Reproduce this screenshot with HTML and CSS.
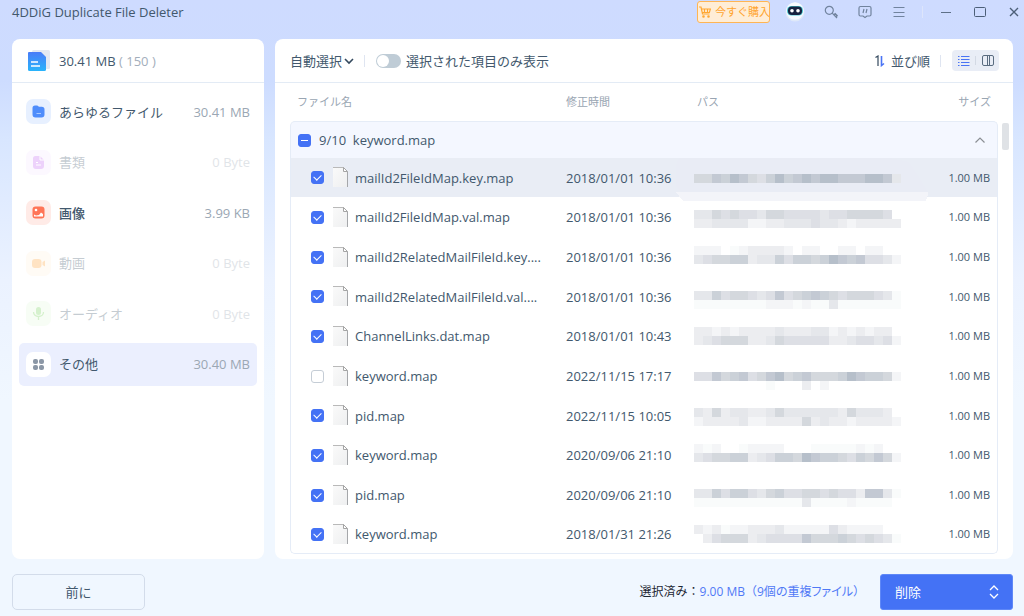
FILE: index.html
```html
<!DOCTYPE html>
<html lang="ja">
<head>
<meta charset="utf-8">
<meta name="viewport" content="width=device-width, initial-scale=1">
<title>4DDiG Duplicate File Deleter</title>
<link rel="stylesheet" href="styles.css">
</head>
<body>
<svg class="defs" width="0" height="0" aria-hidden="true">
  <defs>
    <linearGradient id="docfill" x1="0" y1="0" x2="0" y2="1"><stop offset="0" stop-color="#4a7cf8"/><stop offset="1" stop-color="#29b4fb"/></linearGradient>
    <linearGradient id="pagefill" x1="0" y1="0" x2="1" y2="1"><stop offset="0" stop-color="#fafafa"/><stop offset="1" stop-color="#eeeff0"/></linearGradient>
    <symbol id="page" viewBox="0 0 16 21">
      <path d="M0 .5h11l4 4V20H0z" fill="url(#pagefill)"/>
      <path d="M0 .5h11" stroke="#b9b9b9" fill="none"/>
      <path d="M14.5 4.500V20" stroke="#a5a7aa" fill="none"/>
      <path d="M10.500 .5v4h4z" fill="#fff" stroke="#a5a5a5"/>
    </symbol>
  </defs>
</svg>

<header class="titlebar">
  <h1 class="app-name">4DDiG Duplicate File Deleter</h1>
  <button class="buy" type="button">
    <svg width="12" height="12" viewBox="0 0 12 12" fill="none" stroke="#ffa733" stroke-width="1.200"><path d="M0 1h2l1.500 7h7M2.400 3h9l-1 3.500H3.200M5.500 3.200v3M8.500 3.200v3"/><circle cx="4.500" cy="10.500" r=".7"/><circle cx="9.500" cy="10.500" r=".7"/></svg>
    今すぐ購入
  </button>
  <button class="tool avatar" type="button" aria-label="アシスタント">
    <svg width="20" height="22" viewBox="0 0 20 22"><circle cx="10" cy="11" r="9.500" fill="#dfe9f9"/><circle cx="10" cy="10" r="8.800" fill="#f7faff"/><rect x="2" y="5" width="16" height="9.500" rx="4.500" fill="#48c6cf"/><rect x="3" y="5.500" width="14" height="8.500" rx="4" fill="#17213f"/><circle cx="7" cy="9.700" r="1.800" fill="#fff"/><circle cx="13" cy="9.700" r="1.800" fill="#fff"/></svg>
  </button>
  <button class="tool after-avatar" type="button" aria-label="登録">
    <svg width="14" height="14" viewBox="0 0 14 14" fill="none" stroke="#71839e" stroke-width="1.200"><circle cx="5.300" cy="5.300" r="4"/><path d="M8.200 8.200l4.800 4.800"/><path d="M10 9.800l1.200-1 1.800 1.800-.8 1.200" stroke-width="1.600"/></svg>
  </button>
  <button class="tool" type="button" aria-label="フィードバック">
    <svg width="14" height="14" viewBox="0 0 14 14" fill="none" stroke="#71839e" stroke-width="1.200"><path d="M2.500 1.500h9a1.500 1.500 0 0 1 1.500 1.500v6.500a1.500 1.500 0 0 1-1.500 1.500H9l-2 1.500L5 11H2.500A1.500 1.500 0 0 1 1 9.500V3a1.500 1.500 0 0 1 1.500-1.500z"/><path d="M6 4l-1 4M9 4L8 8"/></svg>
  </button>
  <button class="tool" type="button" aria-label="メニュー">
    <svg width="12" height="12" viewBox="0 0 12 12" stroke="#71839e"><path d="M.5 1.500h11M.5 6.500h11M.5 10.500h11"/></svg>
  </button>
  <span class="title-sep"></span>
  <button class="tool" type="button" aria-label="最小化">
    <svg width="12" height="12" viewBox="0 0 12 12" stroke="#5e7088"><path d="M1 6.500h10"/></svg>
  </button>
  <button class="tool" type="button" aria-label="最大化">
    <svg width="12" height="12" viewBox="0 0 12 12" fill="none" stroke="#4c5f78"><rect x=".5" y="1.500" width="11" height="9" rx="1"/></svg>
  </button>
  <button class="tool close" type="button" aria-label="閉じる">
    <svg width="10" height="10" viewBox="0 0 10 10" stroke="#4c5f78" stroke-width="1.400"><path d="M1 1l8 8M9 1L1 9"/></svg>
  </button>
</header>

<main class="workspace">
  <aside class="panel sidebar">
    <div class="summary">
      <svg width="24" height="24" viewBox="0 0 24 24"><rect x="6" y="1" width="18" height="19" rx="1.500" fill="#e3e8f2"/><path d="M3 3h12l5 5v12.500a1.500 1.500 0 0 1-1.500 1.500h-15A1.500 1.500 0 0 1 2 20.500V4a1 1 0 0 1 1-1z" fill="url(#docfill)"/><path d="M5 13h7M5 17h9" stroke="#fff" stroke-width="1.500"/></svg>
      <span>30.41 MB <span class="muted">( 150 )</span></span>
    </div>
    <nav class="kinds">
      <a class="kind" href="#all"><span class="tile blue"><svg width="13" height="13" viewBox="0 0 13 13"><path d="M.5 3A2.500 2.500 0 0 1 3 .5h2.300l1.700 1.300h2.800A2.700 2.700 0 0 1 12.500 4.500v5a3 3 0 0 1-3 3h-6a3 3 0 0 1-3-3z" fill="#4f8dfb"/><path d="M4.500 8.500h4.500" stroke="#a9c9ff"/></svg></span><span class="kind-name">あらゆるファイル</span><span class="kind-size">30.41 MB</span></a>
      <a class="kind empty" href="#docs"><span class="tile violet"><svg width="13" height="13" viewBox="0 0 13 13"><path d="M3.500 0H8l4 4v6a3 3 0 0 1-3 3H4a3 3 0 0 1-3-3V2.500A2.500 2.500 0 0 1 3.500 0z" fill="#c56cf5"/><path d="M8 0v4h4M4 6.500h2M4 9h5" stroke="#fff" fill="none"/></svg></span><span class="kind-name">書類</span><span class="kind-size">0 Byte</span></a>
      <a class="kind" href="#images"><span class="tile red"><svg width="13" height="13" viewBox="0 0 13 13"><rect x=".5" y=".5" width="12" height="12" rx="3" fill="#ff7557"/><circle cx="4" cy="4" r="1.300" fill="#fff"/><path d="M2 10.500v-2l2 1 3-.5 2-2.500 2 1.500v2.500z" fill="#fff"/></svg></span><span class="kind-name strong">画像</span><span class="kind-size">3.99 KB</span></a>
      <a class="kind empty" href="#videos"><span class="tile orange"><svg width="13" height="13" viewBox="0 0 13 13"><rect y="2" width="9.500" height="9" rx="3" fill="#ffa53b"/><path d="M10.500 5l2.500-1.500v6L10.500 8z" fill="#ffa53b"/></svg></span><span class="kind-name">動画</span><span class="kind-size">0 Byte</span></a>
      <a class="kind empty" href="#audio"><span class="tile green"><svg width="13" height="13" viewBox="0 0 13 13"><rect x="4" width="5" height="8" rx="2.500" fill="#76d25b"/><path d="M1.500 5a5 4.500 0 0 0 10 0M6.500 9.500v3.500" stroke="#76d25b" stroke-width="1.300" fill="none"/></svg></span><span class="kind-name">オーディオ</span><span class="kind-size">0 Byte</span></a>
      <a class="kind current" href="#other" aria-current="page"><span class="tile white"><svg width="13" height="13" viewBox="0 0 13 13" fill="#8b97a6"><rect x="1" y="1" width="5" height="5" rx="2"/><rect x="7" y="1" width="5" height="5" rx="2"/><rect x="1" y="7" width="5" height="5" rx="2"/><rect x="7" y="7" width="5" height="5" rx="2"/></svg></span><span class="kind-name">その他</span><span class="kind-size">30.40 MB</span></a>
    </nav>
  </aside>

  <section class="panel results">
    <div class="toolbar">
      <button class="plain auto" type="button" aria-haspopup="menu">自動選択<svg width="10" height="8" viewBox="0 0 10 8" fill="none" stroke="#34495e" stroke-width="1.600"><path d="M1 2l4 4 4-4"/></svg></button>
      <span class="sep"></span>
      <label class="only"><input class="switch" type="checkbox" role="switch">選択された項目のみ表示</label>
      <button class="plain sort" type="button"><svg width="10" height="12" viewBox="0 0 10 12" fill="none" stroke-width="1.200"><path d="M.5 2.500L3 1v10" stroke="#34495e"/><path d="M6.500 1v9.500L9 8.500" stroke="#4a74f5" stroke-width="1.600"/></svg>並び順</button>
      <span class="sep"></span>
      <div class="views">
        <button class="plain view" type="button" aria-label="リスト表示" aria-pressed="true"><svg width="12" height="12" viewBox="0 0 12 12" stroke="#4a74f5" stroke-width="1.200"><path d="M0 1.500h1.500M3 1.500h8.500M0 4.500h1.500M3 4.500h8.500M0 7.500h1.500M3 7.500h8.500M0 10.500h1.500M3 10.500h8.500"/></svg></button>
        <span class="view-sep"></span>
        <button class="plain view" type="button" aria-label="分割表示" aria-pressed="false"><svg width="12" height="12" viewBox="0 0 12 12" fill="none" stroke="#5a6c80"><rect x=".5" y=".5" width="11" height="10" rx="1.500"/><path d="M5.500 .5v10M7.500 .5v10"/></svg></button>
      </div>
    </div>
    <div class="list">
      <table class="files">
        <colgroup><col class="c-name"><col class="c-date"><col><col class="c-size"></colgroup>
        <thead>
          <tr><th scope="col" class="h-name">ファイル名</th><th scope="col">修正時間</th><th scope="col" class="h-path">パス</th><th scope="col" class="size">サイズ</th></tr>
        </thead>
        <tbody class="group">
          <tr><th scope="rowgroup" colspan="4"><div class="group-head"><input id="g" class="tick part" type="checkbox"><label for="g">9/10&nbsp; keyword.map</label><button class="plain fold" type="button" aria-label="折りたたむ"><svg width="10" height="6" viewBox="0 0 10 6" fill="none" stroke="#8b8f94" stroke-width="1.200"><path d="M.5 5.500L5 1l4.500 4.500"/></svg></button></div></th></tr>
        </tbody>
        <tbody class="rows">
          <tr class="active"><td><label class="name"><input class="tick" type="checkbox" checked><svg class="page"><use href="#page"/></svg>mailId2FileIdMap.key.map</label></td><td>2018/01/01 10:36</td><td class="path"></td><td class="size">1.00 MB</td></tr>
          <tr><td><label class="name"><input class="tick" type="checkbox" checked><svg class="page"><use href="#page"/></svg>mailId2FileIdMap.val.map</label></td><td>2018/01/01 10:36</td><td class="path"></td><td class="size">1.00 MB</td></tr>
          <tr><td><label class="name"><input class="tick" type="checkbox" checked><svg class="page"><use href="#page"/></svg>mailId2RelatedMailFileId.key....</label></td><td>2018/01/01 10:36</td><td class="path"></td><td class="size">1.00 MB</td></tr>
          <tr><td><label class="name"><input class="tick" type="checkbox" checked><svg class="page"><use href="#page"/></svg>mailId2RelatedMailFileId.val....</label></td><td>2018/01/01 10:36</td><td class="path"></td><td class="size">1.00 MB</td></tr>
          <tr><td><label class="name"><input class="tick" type="checkbox" checked><svg class="page"><use href="#page"/></svg>ChannelLinks.dat.map</label></td><td>2018/01/01 10:43</td><td class="path"></td><td class="size">1.00 MB</td></tr>
          <tr><td><label class="name"><input class="tick" type="checkbox"><svg class="page"><use href="#page"/></svg>keyword.map</label></td><td>2022/11/15 17:17</td><td class="path"></td><td class="size">1.00 MB</td></tr>
          <tr><td><label class="name"><input class="tick" type="checkbox" checked><svg class="page"><use href="#page"/></svg>pid.map</label></td><td>2022/11/15 10:05</td><td class="path"></td><td class="size">1.00 MB</td></tr>
          <tr><td><label class="name"><input class="tick" type="checkbox" checked><svg class="page"><use href="#page"/></svg>keyword.map</label></td><td>2020/09/06 21:10</td><td class="path"></td><td class="size">1.00 MB</td></tr>
          <tr><td><label class="name"><input class="tick" type="checkbox" checked><svg class="page"><use href="#page"/></svg>pid.map</label></td><td>2020/09/06 21:10</td><td class="path"></td><td class="size">1.00 MB</td></tr>
          <tr><td><label class="name"><input class="tick" type="checkbox" checked><svg class="page"><use href="#page"/></svg>keyword.map</label></td><td>2018/01/31 21:26</td><td class="path"></td><td class="size">1.00 MB</td></tr>
        </tbody>
      </table>
      <span class="thumb"></span>
    </div>
  </section>
</main>

<footer class="actions">
  <button class="back" type="button">前に</button>
  <p class="picked">選択済み：<span class="count">9.00 MB（<span class="dupes">9個の重複ファイル</span>）</span></p>
  <button class="delete" type="button">削除<svg width="10" height="14" viewBox="0 0 10 14" fill="none" stroke="#fff" stroke-width="1.300"><path d="M1 5l4-4 4 4M1 9l4 4 4-4"/></svg></button>
</footer>
<script src="mosaic.js"></script>
</body>
</html>
```

FILE: styles.css
```css
* { box-sizing: border-box; }

body {
  margin: 0;
  min-height: 100vh;
  display: flex;
  flex-direction: column;
  background: linear-gradient(#cedbff 0, #cddcff 80px, #d8e6ff 140px, #ebf2ff 280px, #f0f7ff 400px, #f0f7ff 100%);
  color: #42586d;
  font: 13px/20px "Open Sans", "Noto Sans CJK JP", sans-serif;
}

.defs { position: absolute; }
svg { display: block; flex: none; }

button {
  font: inherit;
  color: inherit;
  cursor: pointer;
}

.plain, .tool {
  border: 0;
  padding: 0;
  background: none;
}

/* Title bar */
.titlebar {
  display: flex;
  align-items: center;
  height: 24px;
  margin-bottom: 15px;
  padding-left: 12px;
}

.app-name {
  flex: 1;
  margin: 0;
  font-size: 13px;
  font-weight: 400;
  white-space: nowrap;
}

.buy {
  display: flex;
  align-items: center;
  gap: 4px;
  width: 73px;
  height: 22px;
  margin-right: 8px;
  padding: 0 0 0 1px;
  border: 1px solid #ffb554;
  border-radius: 3px;
  background: #ffedd6;
  color: #ffa42e;
  font-size: 11px;
  white-space: nowrap;
}

.tool {
  display: flex;
  align-items: center;
  justify-content: center;
  width: 34px;
  height: 24px;
}

.after-avatar { margin-left: 2px; }

.close {
  width: 27px;
  justify-content: flex-start;
  padding-left: 12px;
}

.title-sep {
  width: 1px;
  height: 12px;
  margin: 0 6px;
  background: #dde5fb;
}

/* Panels */
.workspace {
  flex: 1;
  display: flex;
  gap: 11px;
  padding: 0 11px 0 12px;
}

.panel {
  background: #fff;
  border-radius: 8px;
}

.sidebar { width: 252px; flex: none; }

.summary {
  display: flex;
  align-items: center;
  gap: 9px;
  height: 44px;
  padding-left: 14px;
  border-bottom: 1px solid #e3ebf5;
}

.muted { color: #a3aebb; }

.kinds {
  display: flex;
  flex-direction: column;
  justify-content: space-between;
  min-height: 303px;
  padding: 7px 7px 0;
}

.kind {
  display: flex;
  align-items: center;
  gap: 8px;
  height: 43px;
  padding: 0 7px;
  border-radius: 5px;
  color: inherit;
  text-decoration: none;
}

.kind-name { flex: 1; }
.strong { font-weight: 500; }
.kind-size { color: #9ba7b4; }
.empty { opacity: 0.3; }
.current { background: #ebeffe; }

.tile {
  display: grid;
  place-items: center;
  width: 25px;
  height: 25px;
  border-radius: 7px;
}

.blue { background: #e7f0ff; }
.violet { background: #f8e9ff; }
.red { background: #ffebe7; }
.orange { background: #fff2e0; }
.green { background: #e6fbe0; }
.white { background: #fff; }

/* Results toolbar */
.results { flex: 1; min-width: 0; }

.toolbar {
  display: flex;
  align-items: center;
  height: 44px;
  padding: 0 14px 0 15px;
  border-bottom: 1px solid #e3ebf5;
  white-space: nowrap;
}

.auto, .sort, .only {
  display: flex;
  align-items: center;
}

.auto { gap: 2px; }
.sort { gap: 6px; margin-left: auto; }
.only { gap: 5px; }

.sep {
  width: 1px;
  height: 12px;
  margin: 0 11px 0 10px;
  background: #dfe5f1;
}

.switch {
  appearance: none;
  width: 25px;
  height: 14px;
  margin: 0;
  padding: 1px;
  border-radius: 7px;
  background: #bfccd6;
}

.switch::before {
  content: "";
  display: block;
  width: 12px;
  height: 12px;
  border-radius: 50%;
  background: #fff;
}

.switch:checked { background: #4a74f5; }
.switch:checked::before { margin-left: auto; }

.views {
  display: flex;
  align-items: center;
  width: 47px;
  height: 21px;
  border-radius: 4px;
  background: #e9edf6;
}

.view {
  flex: 1;
  display: grid;
  place-items: center;
}

.view-sep { width: 1px; height: 9px; background: #d3d9e4; }

/* File table */
.list {
  position: relative;
  padding: 0 15px 5px;
}

.thumb {
  position: absolute;
  top: 40px;
  right: 4px;
  width: 7px;
  height: 27px;
  border-radius: 2px;
  background: #dfe2e6;
}

.files {
  width: 100%;
  table-layout: fixed;
  border-collapse: separate;
  border-spacing: 0;
}

.c-name { width: 276px; }
.c-date { width: 128px; }
.c-size { width: 70px; }

.files th, .files td {
  padding: 0;
  text-align: left;
  font-weight: 400;
  white-space: nowrap;
}

.files thead th {
  height: 38px;
  color: #99a5b2;
  font-size: 11px;
}

.files .h-name { padding-left: 7px; }
.files .h-path { padding-left: 3px; }
.files .size { padding-right: 7px; text-align: right; font-size: 11px; }

.group th {
  border: 1px solid #e5ecf7;
  border-bottom: 0;
  border-radius: 5px 5px 0 0;
  background: #f4f7ff;
}

.group-head {
  display: flex;
  align-items: center;
  gap: 8px;
  height: 36px;
  padding: 0 12px 0 7px;
}

.fold { margin-left: auto; }

.rows td { height: 40px; }
.rows tr:nth-child(3n + 1) td { height: 39px; }
.rows td:first-child { border-left: 1px solid #e5ecf7; }
.rows td:last-child { border-right: 1px solid #e5ecf7; }
.rows tr:last-child td { border-bottom: 1px solid #e5ecf7; }
.rows tr:last-child td:first-child { border-bottom-left-radius: 5px; }
.rows tr:last-child td:last-child { border-bottom-right-radius: 5px; }
.active td { background: #e9edf5; }
.files .path { vertical-align: top; }

.name {
  display: flex;
  align-items: center;
  padding-left: 20px;
}

.page {
  width: 16px;
  height: 21px;
  margin: 0 6px 0 9px;
}

.tick {
  appearance: none;
  flex: none;
  display: grid;
  place-items: center;
  width: 13px;
  height: 13px;
  margin: 0;
  border: 1px solid #c5cdd6;
  border-radius: 3px;
  background: #fff;
}

.tick:checked, .part {
  border-color: #4472f5;
  background: #4472f5;
}

.tick:checked::before {
  content: "";
  width: 6px;
  height: 4px;
  margin-bottom: 2px;
  border: solid #fff;
  border-width: 0 0 1px 1px;
  transform: rotate(-45deg);
}

.part::before {
  content: "";
  width: 7px;
  height: 1px;
  background: #fff;
}

.mosaic { overflow: visible; }

/* Footer */
.actions {
  display: flex;
  align-items: center;
  padding: 15px 11px 6px 12px;
}

.back, .delete {
  width: 133px;
  height: 36px;
  border-radius: 5px;
}

.back {
  border: 1px solid #d3dcea;
  background: transparent;
}

.picked {
  margin: 0 15px 0 auto;
  color: #1d2733;
  font-size: 12px;
}

.count { color: #5079f6; }
.dupes { font-feature-settings: "palt"; }

.delete {
  display: flex;
  align-items: center;
  justify-content: space-between;
  padding: 0 13px 0 14px;
  border: 1px solid #5f88f7;
  border-radius: 3px;
  background: #4472f5;
  color: #fff;
}
```

FILE: mosaic.js
```js
// Pixelated paths: one digit per 9px block, 0 = clear, 9 = darkest.
const SHADES = ["", "#f9fbfb", "#f4f5f7", "#ecedf0", "#e5e7eb", "#dddfe5", "#d4d8dd", "#cbd1d8", "#c3c9d3", "#b6bfca"];
const BLOCK = 9;
const PATHS = [
  { top: 16, lines: ["66879865797898998889984"] },
  { top: 13, lines: ["44656554665555455666650", "33444422334445443233333"] },
  { top: 9, lines: ["22201233332022002202200", "45667734475776798785542"] },
  { top: 14, lines: ["44756654585678765666541", "11111111222121141111111"] },
  { top: 11, lines: ["33232333343334423232330", "34566633465555533455452"] },
  { top: 16, lines: ["55867856896786667987762", "00000000100030200000000"] },
  { top: 12, lines: ["43634433464444443644430", "23333422333363433233332"] },
  { top: 9, lines: ["21200122220001111121200", "45667734577698776576862"] },
  { top: 14, lines: ["44757754675566565538841", "11111111111141111211110"] },
  { top: 10, lines: ["32312233342222253222200", "03566634555586667656541"] },
];
const SVG = "http://www.w3.org/2000/svg";

function add(parent, name, attrs) {
  const node = document.createElementNS(SVG, name);
  for (const key in attrs) node.setAttribute(key, attrs[key]);
  return parent.appendChild(node);
}

document.querySelectorAll(".path").forEach((cell, i) => {
  const svg = add(cell, "svg", { class: "mosaic", width: 207, height: 38, "shape-rendering": "crispEdges", role: "img", "aria-label": "非表示のパス" });
  if (i === 0) {
    add(svg, "path", { d: "M-18 7l3-7h210l20 4 8 12 11 18H-12l-6-5z", fill: "#e9ecf5" });
    add(svg, "path", { d: "M-18 34H234v3l-2 6H-11z", fill: "#f3f4f9" });
  }
  PATHS[i].lines.forEach((line, row) => {
    [...line].forEach((level, col) => {
      if (level === "0") return;
      add(svg, "rect", { x: col * BLOCK, y: PATHS[i].top + row * BLOCK, width: BLOCK, height: BLOCK, fill: SHADES[level] });
    });
  });
});
```
